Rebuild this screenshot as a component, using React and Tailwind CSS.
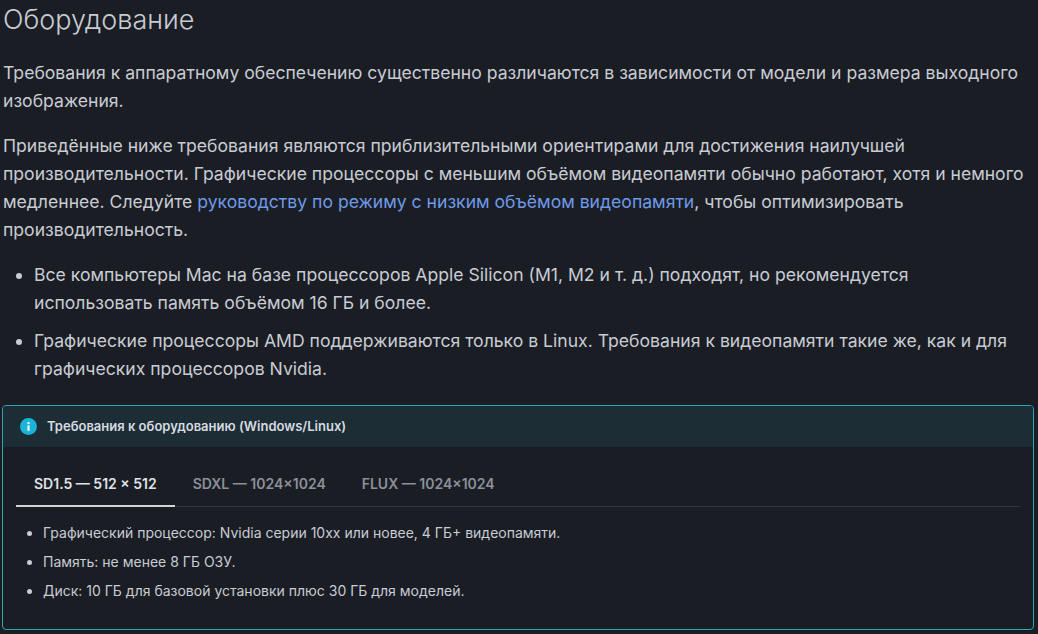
export default function App() {
  return (
    <div className="w-[1038px] h-[634px] overflow-hidden bg-[#1b1d25] text-[#c8ccd3]" style={{ fontFamily: "Inter, 'Noto Sans', sans-serif" }}>
      <h1 className="text-[27px] font-light leading-[32px] pl-[3px] pt-[4px] text-[#c8ccd3]">Оборудование</h1>
      <div className="pl-[3px] pr-[6px] text-[17.6px] leading-[28px]">
        <p className="mt-[23px]">Требования к аппаратному обеспечению существенно различаются в зависимости от модели и размера выходного изображения.</p>
        <p className="mt-[17px]">Приведённые ниже требования являются приблизительными ориентирами для достижения наилучшей производительности. Графические процессоры с меньшим объёмом видеопамяти обычно работают, хотя и немного медленнее. Следуйте <span className="text-[#6e9ae6]">руководству по режиму с низким объёмом видеопамяти</span>, чтобы оптимизировать производительность.</p>
        <ul className="mt-[17px] list-disc pl-[31px] pr-[20px] flex flex-col gap-[10px]">
          <li>Все компьютеры Mac на базе процессоров Apple Silicon (M1, M2 и т. д.) подходят, но рекомендуется использовать память объёмом 16 ГБ и более.</li>
          <li>Графические процессоры AMD поддерживаются только в Linux. Требования к видеопамяти такие же, как и для графических процессоров Nvidia.</li>
        </ul>
      </div>
      <div className="mt-[22px] ml-[2px] w-[1032px] h-[225px] border border-[#2aa6b8] rounded-[4px] overflow-hidden">
        <div className="h-[41px] bg-[#1d2d36] flex items-center gap-[10px] pl-[17px] text-[13px] font-semibold text-[#d7dbe0]">
          <svg width="17" height="17" viewBox="0 0 16 16"><circle cx="8" cy="8" r="8" fill="#1ab4d6"/><rect x="7" y="7" width="2" height="5" fill="#fff"/><circle cx="8" cy="4.8" r="1.1" fill="#fff"/></svg>
          <span>Требования к оборудованию (Windows/Linux)</span>
        </div>
        <div className="px-[13px]">
          <div className="mt-[22px] flex border-b border-[#33363f] text-[14px] font-semibold">
            <div className="px-[18px] pb-[11px] pt-[4px] border-b-2 border-[#d0d3d8] -mb-px text-[#dfe2e6]">SD1.5 — 512 × 512</div>
            <div className="px-[18px] pb-[11px] pt-[4px] text-[#8c9099]">SDXL — 1024×1024</div>
            <div className="px-[18px] pb-[11px] pt-[4px] text-[#8c9099]">FLUX — 1024×1024</div>
          </div>
          <ul className="mt-[16px] list-disc pl-[27px] text-[14px] leading-[20px] flex flex-col gap-[9px]">
            <li>Графический процессор: Nvidia серии 10xx или новее, 4 ГБ+ видеопамяти.</li>
            <li>Память: не менее 8 ГБ ОЗУ.</li>
            <li>Диск: 10 ГБ для базовой установки плюс 30 ГБ для моделей.</li>
          </ul>
        </div>
      </div>
    </div>
  );
}
